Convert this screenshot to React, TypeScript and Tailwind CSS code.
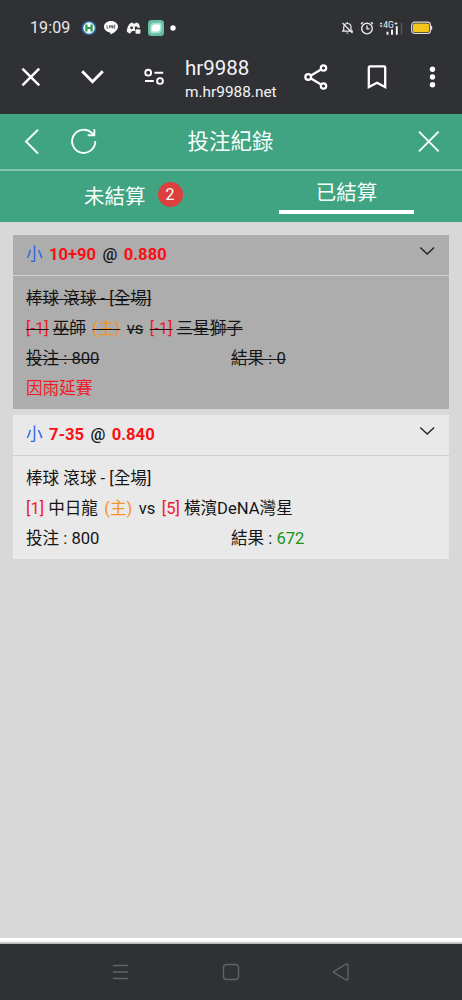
import React from "react";

function Svg({ w, h, children, className = "" }: { w: number; h: number; children: React.ReactNode; className?: string }) {
  return (
    <svg width={w} height={h} viewBox={`0 0 ${w} ${h}`} fill="none" className={`shrink-0 ${className}`}>
      {children}
    </svg>
  );
}

function StatusBar() {
  return (
    <div className="flex h-[56px] items-center pl-[30px] pr-[29px]">
      <span className="w-[40px] text-[16px] tracking-[0.1px] text-[#e8e8ea]">19:09</span>
      <Svg w={16} h={16} className="ml-[11px]">
        <circle cx="8" cy="8" r="7.3" fill="#2f69a8" />
        <circle cx="8" cy="8" r="5.7" fill="#f2fbf6" />
        <path d="M5.4 4.4v7.200M10.600 4.400v7.200M5.400 8h5.200" stroke="#2c9b4e" strokeWidth="2.200" />
      </Svg>
      <Svg w={16} h={16} className="ml-[6px]">
        <path d="M8 1C4.100 1 1 3.500 1 6.800c0 3 2.600 5.300 6 5.800.6.1.6.7.4 2 3-1.300 7.600-4.400 7.600-7.800C15 3.500 11.900 1 8 1Z" fill="#fff" />
        <path d="M4 5.200v3h1.300M6.500 5.200v3M7.900 8.200v-3l1.700 3v-3M12.300 5.200H11v3h1.300M11 6.700h1.200" stroke="#3b3b3f" strokeWidth=".75" />
      </Svg>
      <Svg w={16} h={16} className="ml-[7px]">
        <path d="M4.500 3 6.600 2.500l.5.900h2.200l.5-.9 2.200.6c1.300 1.400 1.900 2.900 2 4.700H9v3.200H6.200l-2.400 2.700C2.400 12.900 1.300 12.200.8 11.500 1 8 2 5.300 4.500 3Z" fill="#f3f3f4" />
        <circle cx="5.600" cy="7.800" r="1.400" fill="#303135" />
        <path d="M8.800 6.600h2.600v1.800H8.800z" fill="#303135" />
        <rect x="9.500" y="9.200" width="4.900" height="4.600" rx="1" fill="#f3f3f4" />
      </Svg>
      <Svg w={16} h={16} className="ml-[6px]">
        <rect width="16" height="16" rx="3.500" fill="#65bfa0" />
        <path d="M2.200 7.500c0-3.200 1.700-4.800 4.600-4.800h5c1.300 0 2 .7 2 2v3.700c0 3.200-1.700 4.800-4.600 4.800H4.200c-1.300 0-2-.7-2-2Z" fill="#a5e4cc" />
        <path d="M3.700 8c0-2.300 1.200-3.500 3.300-3.500h3.600c1 0 1.500.5 1.500 1.400v2c0 2.300-1.200 3.500-3.300 3.500H5.200c-1 0-1.500-.5-1.500-1.400Z" fill="#fff" />
      </Svg>
      <Svg w={6} h={6} className="ml-[6px]">
        <circle cx="3" cy="3" r="2.700" fill="#fff" />
      </Svg>
      <span className="flex-1" />
      <Svg w={13} h={14}>
        <path d="M2.700 9.700V6.300C2.700 4 4.100 2.500 6.300 2.500S10 4 10 6.300v3.400M1 10.200h11M6.300 1v1.500M5.500 12h1.700M1.500 2l10 10" stroke="#ededee" strokeWidth="1.200" />
      </Svg>
      <Svg w={14} h={14} className="ml-[6px]">
        <circle cx="7" cy="7.600" r="5.300" stroke="#ededee" strokeWidth="1.400" />
        <path d="M7 4.600v3.300h2.500M1 3l2-1.800M13 3l-2-1.800" stroke="#ededee" strokeWidth="1.300" />
      </Svg>
      <Svg w={24} h={16} className="ml-[5px]">
        <path d="m.6 4.300 1.500-2 1.500 2ZM.6 5.500l1.500 2 1.500-2Z" fill="#e8e8ea" />
        <text x="4.200" y="8" fill="#f0f0f1" fontSize="8.500" fontWeight="400" fontFamily="Roboto, sans-serif">4G</text>
        <path d="M15.500 3.500h3M17 2v3" stroke="#e8e8ea" strokeWidth=".9" />
        <path d="M8.500 11.700V14.700M13 9.500V14.700M17.800 6.200V14.700" stroke="#f0f0f1" strokeWidth="2" />
        <path d="M22.500 2.500V14.500" stroke="#56575b" strokeWidth="1.400" />
      </Svg>
      <Svg w={22} h={14} className="ml-[8px]">
        <rect x=".7" y="1.200" width="18.800" height="11.300" rx="3" stroke="#dedede" strokeWidth="1.200" />
        <rect x="2" y="2.500" width="16.200" height="8.700" rx="1.800" fill="#f6c51b" />
        <path d="M20.600 5v3.800" stroke="#dedede" strokeWidth="1.200" />
      </Svg>
    </div>
  );
}

function BrowserBar() {
  return (
    <div className="flex h-[58px] items-start pl-[20px] pr-[20px]">
      <Svg w={22} h={42}>
        <path d="m2.400 12.600 16.800 16.800M19.200 12.600 2.400 29.400" stroke="#fff" strokeWidth="2.500" />
      </Svg>
      <Svg w={24} h={42} className="ml-[38px]">
        <path d="M2.200 15.300 12.500 25.700 22.800 15.300" stroke="#fff" strokeWidth="2.900" />
      </Svg>
      <Svg w={22} h={42} className="ml-[39px]">
        <circle cx="5.200" cy="16.700" r="2.900" stroke="#fff" strokeWidth="1.900" />
        <circle cx="17" cy="25" r="2.900" stroke="#fff" strokeWidth="1.900" />
        <path d="M11.500 16.700h8.700M2 25h8.800" stroke="#fff" strokeWidth="1.900" />
      </Svg>
      <div className="ml-[20px] w-[110px] whitespace-nowrap text-[#f4f4f5]">
        <div className="text-[20.500px] leading-[24px]">hr9988</div>
        <div className="text-[15.400px] leading-[24px]">m.hr9988.net</div>
      </div>
      <Svg w={26} h={42} className="ml-[8px]">
        <path d="M5.500 21 20.500 12M5.500 21l15 9" stroke="#fff" strokeWidth="2.100" />
        <g fill="#303135" stroke="#fff" strokeWidth="2.200">
          <circle cx="5.200" cy="21" r="2.900" />
          <circle cx="20.500" cy="12" r="2.700" />
          <circle cx="20.500" cy="30" r="2.700" />
        </g>
      </Svg>
      <Svg w={22} h={42} className="ml-[37px]">
        <path d="M2.800 11.400a1 1 0 0 1 1-1h14.400a1 1 0 0 1 1 1V31L11 26.800 2.800 31Z" stroke="#fff" strokeWidth="2.300" />
      </Svg>
      <Svg w={8} h={42} className="ml-[40px]">
        <g fill="#fff">
          <circle cx="4.500" cy="13.300" r="2.700" />
          <circle cx="4.500" cy="21" r="2.700" />
          <circle cx="4.500" cy="28.700" r="2.700" />
        </g>
      </Svg>
    </div>
  );
}

function PageHeader() {
  return (
    <header className="h-[108px] bg-[#40a381] text-[#f6fffb]">
      <div className="flex h-[57px] items-center border-b-2 border-[#83c4ae] pl-[24px] pr-[21px]">
        <Svg w={16} h={26}>
          <path d="M14 .7 2 12.500l12 12" stroke="#f6fffb" strokeWidth="1.900" />
        </Svg>
        <Svg w={28} h={28} className="ml-[30px]">
          <path d="M25.300 13.100A11.600 11.600 0 1 1 21.700 4.900L24 7.100" stroke="#f6fffb" strokeWidth="1.900" />
          <path d="M24.300 1.300v6h-6.600" stroke="#f6fffb" strokeWidth="1.900" />
        </Svg>
        <h1 className="flex-1 pt-[2px] text-center text-[21.500px] font-normal">投注紀錄</h1>
        <Svg w={24} h={24} className="ml-[54px]">
          <path d="m2 1.700 19.600 19.600M21.600 1.700 2 21.300" stroke="#f6fffb" strokeWidth="1.900" />
        </Svg>
      </div>
      <nav className="flex h-[51px] text-[20.500px] leading-[30px]">
        <div className="flex w-[231px] items-start pl-[84px] pt-[11px]">
          <span>未結算</span>
          <span className="ml-[12px] flex size-[25px] items-center justify-center rounded-full bg-[#dd3f3e] text-[16px] leading-none">2</span>
        </div>
        <div className="ml-[48px] h-[43px] w-[135px] border-b-[4px] border-white pt-[7px] text-center">已結算</div>
      </nav>
    </header>
  );
}

type Bet = {
  pick: string;
  odds: string;
  home: string;
  homeRank: string;
  away: string;
  awayRank: string;
  result: string;
  note?: string;
};

const bets: Bet[] = [
  { pick: "10+90", odds: "0.880", home: "巫師", homeRank: "[-1]", away: "三星獅子", awayRank: "[-1]", result: "0", note: "因雨延賽" },
  { pick: "7-35", odds: "0.840", home: "中日龍", homeRank: "[1]", away: "橫濱DeNA灣星", awayRank: "[5]", result: "672" },
];

function BetCard({ bet }: { bet: Bet }) {
  const voided = Boolean(bet.note);
  const strike = voided ? "line-through decoration-[#151515] decoration-[1.4px]" : "";
  return (
    <article className={voided ? "bg-[#adadad]" : "bg-[#e9e9e9]"}>
      <div className={`flex h-[41px] border-b-[1.500px] pl-[13px] pr-[14px] ${voided ? "border-[#d2d2d2]" : "border-[#cecece]"}`}>
        <div className="flex flex-1 gap-[6.400px] pt-[5px] leading-[30px] font-bold text-[#fa0f14]">
          <span className="font-normal text-[#2862e9]">小</span>
          <span>{bet.pick}</span>
          <span className="font-medium text-[#151515]">@</span>
          <span>{bet.odds}</span>
        </div>
        <Svg w={16} h={32}>
          <path d="m1.300 12.500 6.900 6.500 6.900-6.500" stroke="#202020" strokeWidth="1.300" />
        </Svg>
      </div>
      <div className="px-[13px] pb-[5px] pt-[8px] leading-[30px]">
        <div><span className={strike}>棒球 滾球 - [全場]</span></div>
        <div className="flex">
          <span className={`mr-[4px] text-[#ed1b29] ${strike}`}>{bet.homeRank}</span>
          <span className={strike}>{bet.home}</span>
          <span className={`mx-[6.400px] text-[#f3942a] ${strike}`}>(主)</span>
          <span className={strike}>vs</span>
          <span className={`ml-[6.400px] mr-[4px] text-[#ed1b29] ${strike}`}>{bet.awayRank}</span>
          <span className={strike}>{bet.away}</span>
        </div>
        <div className="grid grid-cols-2">
          <div><span className={strike}>投注 : 800</span></div>
          <div>
            <span className={strike}>結果 : <span className={voided ? "" : "text-[#159415]"}>{bet.result}</span></span>
          </div>
        </div>
        {bet.note && <div className="text-[#ed1b29]">{bet.note}</div>}
      </div>
    </article>
  );
}

function NavigationBar() {
  return (
    <footer>
      <div className="h-[6px] bg-linear-to-b from-white from-50% to-[#a8a8a8]" />
      <div className="flex h-[56px] items-start justify-between bg-[#303135] pl-[112px] pr-[112px] pt-[19px]">
        <Svg w={17} h={18}>
          <path d="M1 2.500h15M1 9h15M1 15.500h15" stroke="#626367" strokeWidth="1.300" />
        </Svg>
        <Svg w={18} h={18}>
          <rect x="1.500" y="1.500" width="15" height="15" rx="3" stroke="#626367" strokeWidth="1.400" />
        </Svg>
        <Svg w={18} h={18}>
          <path d="M2 8.300 14.500 1q1.500-.6 1.500 1v14q0 1.600-1.500 1L2 9.700q-1-.7 0-1.400Z" stroke="#626367" strokeWidth="1.400" />
        </Svg>
      </div>
    </footer>
  );
}

export default function App() {
  return (
    <div className="flex h-[1000px] w-[462px] flex-col overflow-hidden bg-[#d8d8d8] font-[Roboto,'Noto_Sans_CJK_TC',sans-serif] text-[16.600px] text-[#151515]">
      <div className="bg-[#303135]">
        <StatusBar />
        <BrowserBar />
      </div>
      <PageHeader />
      <main className="flex flex-1 flex-col gap-[6px] px-[13px] pt-[13px]">
        {bets.map((bet) => (
          <BetCard key={bet.pick} bet={bet} />
        ))}
      </main>
      <NavigationBar />
    </div>
  );
}
